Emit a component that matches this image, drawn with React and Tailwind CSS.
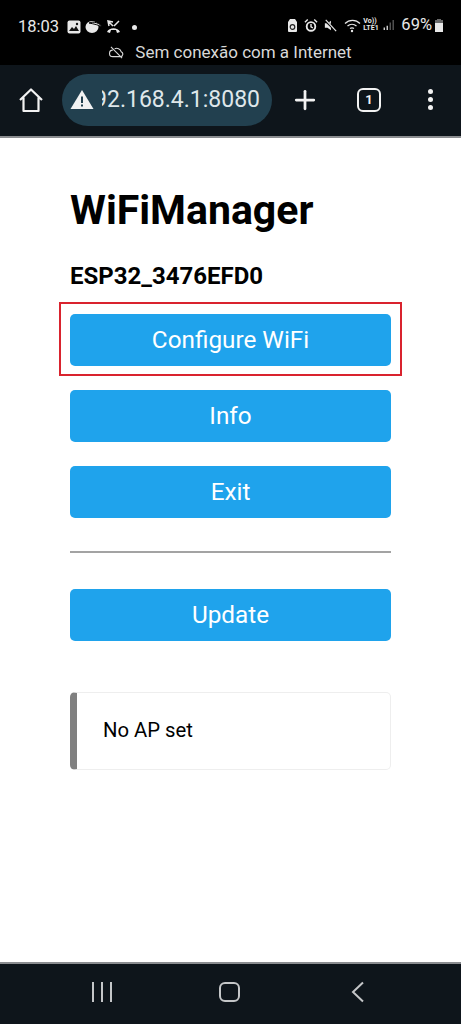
import { Plus } from "lucide-react";

const roboto = { fontFamily: "Roboto, sans-serif" };

function StatusIcons() {
  return (
    <div className="flex items-center text-[#e8e8e8]">
      <svg width="11" height="15" viewBox="0 0 11 15"><path d="M3 1h5l2 3v9a1 1 0 0 1-1 1H2a1 1 0 0 1-1-1V4z" fill="#e8e8e8" /><circle cx="5.500" cy="9" r="2.300" fill="none" stroke="#222" strokeWidth="1.200" /></svg>
      <svg width="14" height="15" viewBox="0 0 15 15" className="ml-[6px]"><circle cx="7.500" cy="8.500" r="4.600" fill="none" stroke="#e8e8e8" strokeWidth="2" /><path d="M1 4l3-3M14 4l-3-3M7.500 6v3l2 1" stroke="#e8e8e8" strokeWidth="1.500" fill="none" /></svg>
      <svg width="13" height="15" viewBox="0 0 15 15" className="ml-[6px]"><path d="M1 5h3l4-3v11l-4-3H1z" fill="#e8e8e8" /><path d="M1 1l13 13" stroke="#000" strokeWidth="3" /><path d="M2 1l12 13" stroke="#e8e8e8" strokeWidth="1.400" /></svg>
      <svg width="17" height="15" viewBox="0 0 17 15" className="ml-[7px]"><path d="M1 5.500a10.500 10.500 0 0 1 15 0M3.500 8a7 7 0 0 1 9 0M6 10.500a3.500 3.500 0 0 1 4 0" stroke="#e8e8e8" strokeWidth="1.300" fill="none" /><circle cx="8" cy="13" r="1.200" fill="#e8e8e8" /></svg>
      <div className="ml-[2px] w-[15px] flex flex-col text-[7px] font-bold leading-[7px]"><span>Vo))</span><span>LTE1</span></div>
      <svg width="11" height="14" viewBox="0 0 13 14" className="ml-[5px]"><path d="M1.500 10v3" stroke="#e8e8e8" strokeWidth="1.500" /><path d="M5 8v5" stroke="#e8e8e8" strokeWidth="1.500" /><path d="M8.500 4v9M12 1v12" stroke="#777" strokeWidth="1.200" /></svg>
      <span className="ml-[7px] text-[16.500px] leading-none">69%</span>
      <svg width="10" height="15" viewBox="0 0 10 15" className="ml-[2px]"><path d="M3 1h4v1h2v3H1V2h2z" fill="#6a6a6a" /><path d="M1 5h8v9H1z" fill="#e8e8e8" /></svg>
    </div>
  );
}

function ManagerButton({ label }) {
  return (
    <button className="w-full h-[52px] rounded-[5px] bg-[#1fa3ec] text-white text-[24.300px] leading-none">
      {label}
    </button>
  );
}

export default function App() {
  return (
    <div className="w-[461px] h-[1024px] flex flex-col bg-white overflow-hidden" style={roboto}>
      <div className="h-[65px] bg-black flex flex-col shrink-0">
        <div className="h-[40px] pl-[18px] pr-[17px] pt-[17px] flex justify-between items-start text-[#e8e8e8]">
          <div className="flex items-center">
            <span className="text-[16.500px] leading-[20px]">18:03</span>
            <svg width="14" height="14" viewBox="0 0 14 14" className="ml-[8px]"><rect x="0.500" y="0.500" width="13" height="13" rx="2" fill="#e8e8e8" /><path d="M2 11l3-4 2 2 2-3 3 5z" fill="#111" /><circle cx="10" cy="4" r="1.200" fill="#111" /></svg>
            <svg width="18" height="14" viewBox="0 0 18 14" className="ml-[4px]"><ellipse cx="7" cy="7" rx="6.500" ry="6" fill="#e8e8e8" /><path d="M4 3c5-2 11 0 13 4-3-2-8-3-13-4z" fill="#e8e8e8" stroke="#000" strokeWidth="1" /></svg>
            <svg width="15" height="14" viewBox="0 0 15 14" className="ml-[3px]"><path d="M2 1l5 5M7 2L2 1l1 5M13 1l-5 5" stroke="#e8e8e8" strokeWidth="1.500" fill="none" /><path d="M1 12c2-5 11-5 13 0l-3 1-1-3H5l-1 3z" fill="#e8e8e8" /></svg>
            <span className="w-[5px] h-[5px] rounded-full bg-[#e8e8e8] ml-[11px]" />
          </div>
          <StatusIcons />
        </div>
        <div className="flex-1 flex items-start justify-center gap-[11px] text-[#d8d8d8] text-[17px] leading-[20px] pt-[2px]">
          <svg width="15" height="13" viewBox="0 0 16 14" className="mt-[4px]" fill="none" stroke="#d8d8d8" strokeWidth="1.200"><path d="M4 4.500a3.500 3.500 0 0 0 0 7h8a2.800 2.800 0 0 0 1-5.400A5 5 0 0 0 6 3" /><path d="M2 1l12 12" /></svg>
          <span>Sem conexão com a Internet</span>
        </div>
      </div>

      <div className="h-[73px] pb-[2px] bg-[#0e151b] flex items-center shrink-0 border-b-2 border-[#8b8d90]">
        <svg width="26" height="26" viewBox="0 0 26 26" className="ml-[18px]" fill="none" stroke="#f2f2f2" strokeWidth="2.200" strokeLinejoin="round"><path d="M2 13L13 2.500 24 13M5.500 10.500V24h15V10.500" /></svg>
        <div className="ml-[18px] w-[210px] h-[52px] rounded-full bg-[#22404f] flex items-center overflow-hidden shrink-0">
          <svg width="24" height="21" viewBox="0 0 24 21" className="ml-[8px] shrink-0"><path d="M12 1l11.500 19H.5z" fill="#f2f2f2" /><path d="M11 7.500h2v6.500h-2zM11 15.500h2v2h-2z" fill="#22404f" /></svg>
          <div className="ml-[8px] w-[158px] overflow-hidden flex justify-end">
            <span className="text-[23px] leading-none text-[#dfe7ea] whitespace-nowrap">192.168.4.1:8080</span>
          </div>
        </div>
        <Plus size={30} strokeWidth={2.200} color="#f2f2f2" className="ml-[18px]" />
        <div className="ml-[37px] w-[24px] h-[24px] rounded-[6px] border-2 border-[#f2f2f2] flex items-center justify-center text-[#f2f2f2] text-[13px] font-bold leading-none">1</div>
        <div className="ml-[47px] flex flex-col gap-[3px]">
          <span className="w-[5px] h-[5px] rounded-full bg-[#f2f2f2]" />
          <span className="w-[5px] h-[5px] rounded-full bg-[#f2f2f2]" />
          <span className="w-[5px] h-[5px] rounded-full bg-[#f2f2f2]" />
        </div>
      </div>

      <div className="flex-1 pl-[70px] pr-[70px] pt-[46px]">
        <h1 className="text-[41px] leading-[52px] font-bold text-black">WiFiManager</h1>
        <h3 className="mt-[26px] text-[24px] leading-[28px] font-bold text-black">ESP32_3476EFD0</h3>
        <div className="mt-[24px] flex flex-col gap-[24px]">
          <div className="relative">
            <ManagerButton label="Configure WiFi" />
            <div className="absolute -left-[11px] -right-[11px] -top-[12px] -bottom-[10px] border-2 border-[#d9232e] pointer-events-none" />
          </div>
          <ManagerButton label="Info" />
          <ManagerButton label="Exit" />
        </div>
        <hr className="mt-[33px] border-t-2 border-[#a3a3a3]" />
        <div className="mt-[36px]"><ManagerButton label="Update" /></div>
        <div className="mt-[51px] h-[78px] pb-[2px] rounded-[5px] border border-[#eeeeee] border-l-[7px] border-l-[#808080] flex items-center pl-[26px] text-[20.300px] text-black">
          No AP set
        </div>
      </div>

      <div className="h-[62px] bg-[#0e151b] border-t-2 border-[#8b8d90] flex items-start shrink-0">
        <div className="ml-[92px] mt-[18px] flex gap-[7px]">
          <span className="w-[2px] h-[20px] bg-[#c4c6c8]" />
          <span className="w-[2px] h-[20px] bg-[#c4c6c8]" />
          <span className="w-[2px] h-[20px] bg-[#c4c6c8]" />
        </div>
        <div className="ml-[107px] mt-[18px] w-[21px] h-[20px] rounded-[6px] border-2 border-[#c4c6c8]" />
        <svg width="14" height="22" viewBox="0 0 14 22" className="ml-[111px] mt-[17px]" fill="none" stroke="#c4c6c8" strokeWidth="2"><path d="M12 1.500L2 11l10 9.500" /></svg>
      </div>
    </div>
  );
}
